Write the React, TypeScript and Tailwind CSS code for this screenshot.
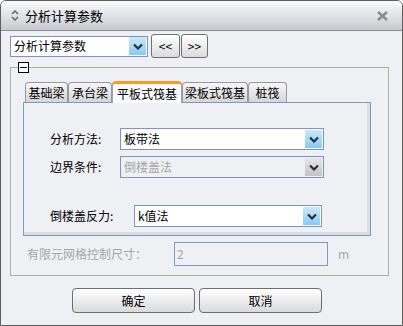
import React from 'react'

const font = { fontFamily: '"Noto Sans CJK SC", "Liberation Sans", sans-serif' }

function Chevron({ color = '#2b2f36' }: { color?: string }) {
  return (
    <svg width="10" height="7" viewBox="0 0 10 7">
      <polyline points="1,1.5 5,5.5 9,1.5" fill="none" stroke={color} strokeWidth="2.2" />
    </svg>
  )
}

function Select({
  value,
  width,
  disabled,
  height = 22,
}: {
  value: string
  width: number
  disabled?: boolean
  height?: number
}) {
  return (
    <div
      className={`flex items-center border border-[#7d90cf] ${disabled ? 'bg-[#eef0f4] text-[#a6a6a6]' : 'bg-white text-black'}`}
      style={{ width, height }}
    >
      <span className="flex-1 pl-[3px] text-[12px] leading-none">{value}</span>
      <div
        className={`mr-[1px] flex h-[18px] w-[17px] items-center justify-center ${
          disabled
            ? 'bg-gradient-to-b from-[#e6e6e6] to-[#c4c4c4]'
            : 'bg-gradient-to-b from-[#c9e8fb] to-[#86cbf3]'
        }`}
      >
        <Chevron />
      </div>
    </div>
  )
}

export default function App() {
  const tabs = [
    { t: '基础梁', w: 'w-[43px]' },
    { t: '承台梁', w: 'w-[44px]' },
    { t: '平板式筏基', w: 'w-[70px]' },
    { t: '梁板式筏基', w: 'w-[66px]' },
    { t: '桩筏', w: 'w-[39px]' },
  ]

  return (
    <div
      className="flex h-[326px] w-[403px] flex-col overflow-hidden rounded-t-[6px] border border-[#5e5e5e] bg-[#eef0f4] text-black"
      style={font}
    >
      {/* 标题栏 */}
      <div className="flex h-[30px] shrink-0 items-center border-b border-[#8c8f94] bg-gradient-to-b from-[#fbfbfb] to-[#c6cad0] pl-[10px] pr-[14px]">
        <svg width="8" height="11" viewBox="0 0 8 11" className="mr-[6px]">
          <polyline points="1,4 4,1 7,4" fill="none" stroke="#6a6a6a" strokeWidth="1.6" />
          <polyline points="1,7 4,10 7,7" fill="none" stroke="#6a6a6a" strokeWidth="1.6" />
        </svg>
        <span className="text-[13px] leading-none">分析计算参数</span>
        <div className="flex-1" />
        <svg width="11" height="10" viewBox="0 0 11 10">
          <line x1="1" y1="1" x2="10" y2="9" stroke="#8c8c8c" strokeWidth="2.4" />
          <line x1="10" y1="1" x2="1" y2="9" stroke="#8c8c8c" strokeWidth="2.4" />
        </svg>
      </div>

      <div className="flex flex-col pl-[9px]">
        {/* 顶部选择 */}
        <div className="mt-[3px] flex h-[24px] items-center">
          <Select value="分析计算参数" width={138} height={21} />
          <button className="ml-[3px] h-[24px] w-[29px] rounded-[3px] border border-[#707070] bg-gradient-to-b from-[#ffffff] to-[#dcdcdc] text-[12px] leading-none">
            &lt;&lt;
          </button>
          <button className="ml-[1px] h-[24px] w-[27px] rounded-[3px] border border-[#707070] bg-gradient-to-b from-[#ffffff] to-[#dcdcdc] text-[12px] leading-none">
            &gt;&gt;
          </button>
        </div>

        {/* 分组框 */}
        <div className="relative mt-[9px] h-[209px] w-[379px] border border-[#b3ae9f] pl-[12px] pt-[14px]">
          <div className="absolute left-[7px] top-[-6px] bg-[#eef0f4]">
            <div className="flex h-[11px] w-[11px] items-center justify-center border border-black bg-white">
              <div className="h-[1px] w-[7px] bg-black" />
            </div>
          </div>

          {/* 选项卡 */}
          <div className="relative z-10 ml-[2px] flex h-[20px] items-end">
            {tabs.map((tab, i) =>
              i === 2 ? (
                <div
                  key={tab.t}
                  className={`flex h-[22px] translate-y-[1px] items-center justify-center rounded-t-[4px] border-x border-t-[3px] border-x-[#9aa3b8] border-t-[#ff9a1e] bg-[#fbfbfd] text-[12px] leading-none ${tab.w}`}
                >
                  {tab.t}
                </div>
              ) : (
                <div
                  key={tab.t}
                  className={`flex h-[20px] items-center justify-center rounded-t-[4px] border border-b-0 border-[#929ba3] bg-gradient-to-b from-[#f7f7f7] to-[#d6d6d6] text-[12px] leading-none ${tab.w}`}
                >
                  {tab.t}
                </div>
              )
            )}
          </div>

          <div className="flex h-[134px] w-[348px] flex-col border border-[#8396c6] pl-[26px] pt-[25px] shadow-[inset_-3px_-3px_0_#dcdee3]">
            <div className="flex h-[22px] items-center">
              <span className="w-[70px] text-[12px] leading-none">分析方法:</span>
              <Select value="板带法" width={204} />
            </div>
            <div className="mt-[6px] flex h-[22px] items-center">
              <span className="w-[70px] text-[12px] leading-none">边界条件:</span>
              <Select value="倒楼盖法" width={204} disabled />
            </div>
            <div className="mt-[27px] flex h-[22px] items-center">
              <span className="w-[84px] text-[12px] leading-none">倒楼盖反力:</span>
              <Select value="k值法" width={188} />
            </div>
          </div>

          <div className="mt-[6px] flex h-[24px] items-center">
            <span className="ml-[4px] w-[147px] text-[12px] leading-none text-[#a6a6a6]">有限元网格控制尺寸：</span>
            <div className="flex h-[24px] w-[154px] items-center border border-[#8396c6] pl-[2px] text-[12px] leading-none text-[#a6a6a6]">
              2
            </div>
            <span className="ml-[10px] text-[12px] leading-none text-[#a6a6a6]">m</span>
          </div>
        </div>

        {/* 按钮 */}
        <div className="ml-[62px] mt-[12px] flex gap-[4px]">
          <button className="h-[25px] w-[123px] rounded-[4px] border border-[#6e6e6e] bg-gradient-to-b from-[#ffffff] to-[#dadada] text-[12px] leading-none">
            确定
          </button>
          <button className="h-[25px] w-[123px] rounded-[4px] border border-[#6e6e6e] bg-gradient-to-b from-[#ffffff] to-[#dadada] text-[12px] leading-none">
            取消
          </button>
        </div>
      </div>
    </div>
  )
}
